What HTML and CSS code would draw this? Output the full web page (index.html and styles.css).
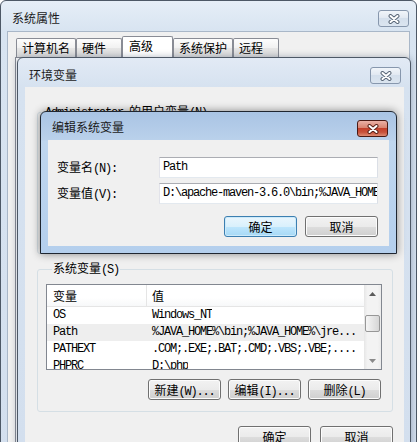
FILE: index.html
```html
<!DOCTYPE html>
<html lang="zh-CN">
<head>
<meta charset="utf-8">
<title>系统属性</title>
<link rel="stylesheet" href="styles.css">
</head>
<body>
<div class="win outer">
  <div class="titlebar">
    <span class="title">系统属性</span>
    <span class="close"><svg width="12" height="10" viewBox="0 0 12 10"><path d="M2.5 2 L9.5 8 M9.5 2 L2.5 8" stroke="#5a6778" stroke-width="4" stroke-linecap="round"/><path d="M2.5 2 L9.5 8 M9.5 2 L2.5 8" stroke="#fff" stroke-width="2" stroke-linecap="round"/></svg></span>
  </div>
  <div class="client">
    <div class="tabs">
      <div class="tab">计算机名</div>
      <div class="tab">硬件</div>
      <div class="tab sel">高级</div>
      <div class="tab">系统保护</div>
      <div class="tab">远程</div>
    </div>
    <div class="panel"></div>
  </div>
</div>

<div class="win env">
  <div class="titlebar">
    <span class="title">环境变量</span>
    <span class="close"><svg width="12" height="10" viewBox="0 0 12 10"><path d="M2.5 2 L9.5 8 M9.5 2 L2.5 8" stroke="#5a6778" stroke-width="4" stroke-linecap="round"/><path d="M2.5 2 L9.5 8 M9.5 2 L2.5 8" stroke="#fff" stroke-width="2" stroke-linecap="round"/></svg></span>
  </div>
  <div class="client">
    <fieldset class="group user">
      <legend><span class="m">Administrator </span>的用户变量<span class="m">(N)</span></legend>
    </fieldset>
    <fieldset class="group sys">
      <legend>系统变量<span class="m">(S)</span></legend>
      <div class="listview">
        <div class="lv-main">
          <div class="lv-head"><span class="c1">变量</span><span class="c2">值</span></div>
          <div class="lv-row"><span class="c1 m">OS</span><span class="c2 m">Windows_NT</span></div>
          <div class="lv-row hl"><span class="c1 m">Path</span><span class="c2 m">%JAVA_HOME%\bin;%JAVA_HOME%\jre...</span></div>
          <div class="lv-row"><span class="c1 m">PATHEXT</span><span class="c2 m">.COM;.EXE;.BAT;.CMD;.VBS;.VBE;....</span></div>
          <div class="lv-row"><span class="c1 m">PHPRC</span><span class="c2 m">D:\php</span></div>
        </div>
        <div class="scrollbar">
          <div class="sb-btn"><svg width="7" height="4" viewBox="0 0 7 4"><polygon points="0,4 3.5,0 7,4" fill="#5b5b5b"/></svg></div>
          <div class="sb-track"><div class="thumb"></div></div>
          <div class="sb-btn"><svg width="7" height="4" viewBox="0 0 7 4"><polygon points="0,0 7,0 3.5,4" fill="#8a8a8a"/></svg></div>
        </div>
      </div>
      <div class="btnrow">
        <button class="btn">新建<span class="m">(W)...</span></button>
        <button class="btn">编辑<span class="m">(I)...</span></button>
        <button class="btn">删除<span class="m">(L)</span></button>
      </div>
    </fieldset>
    <div class="footer">
      <button class="btn">确定</button>
      <button class="btn">取消</button>
    </div>
  </div>
</div>

<div class="win edit">
  <div class="titlebar">
    <span class="title">编辑系统变量</span>
    <span class="close"><svg width="12" height="10" viewBox="0 0 12 10"><path d="M2.5 2 L9.5 8 M9.5 2 L2.5 8" stroke="#5b2219" stroke-width="4" stroke-linecap="round"/><path d="M2.5 2 L9.5 8 M9.5 2 L2.5 8" stroke="#fff" stroke-width="2" stroke-linecap="round"/></svg></span>
  </div>
  <div class="client">
    <div class="field"><span class="lbl">变量名<span class="m">(N):</span></span><div class="input m">Path</div></div>
    <div class="field"><span class="lbl">变量值<span class="m">(V):</span></span><div class="input m">D:\apache-maven-3.6.0\bin;%JAVA_HOME%\bin;%JAVA_HOME%\jre\bin</div></div>
    <div class="dlg-btns">
      <button class="btn default">确定</button>
      <button class="btn">取消</button>
    </div>
  </div>
</div>
</body>
</html>
```
FILE: styles.css
```css
*{box-sizing:border-box;margin:0;padding:0}
html,body{width:420px;height:442px;overflow:hidden}
body{position:relative;background:#fff;font-family:"Noto Sans CJK SC","Noto Sans",sans-serif;font-size:12px;color:#000;line-height:14px}
.m{font-family:"Liberation Mono","DejaVu Sans Mono",monospace;letter-spacing:-1.2px}

.win{display:flex;flex-direction:column;border:1px solid #4d5866;border-radius:6px 6px 0 0}
.titlebar{flex:none;display:flex;justify-content:space-between;align-items:flex-start}
.title{line-height:16px;color:#1b1b1b}
.close{flex:none;width:31px;height:17px;display:flex;align-items:center;justify-content:center;border:1px solid #8797ad;border-radius:3px;background:linear-gradient(#f1f5fa,#e2e9f2 45%,#d4dfec 50%,#dbe5f0)}
.close svg{display:block}

.outer{width:417px;height:470px;background:linear-gradient(#e6eef7,#d8e4f1 30px,#d3dfee)}
.outer .titlebar{height:30px;padding:9px 7px 0 11px}
.outer>.client{flex:1;margin:0 6px;background:#f0f0f0;border:1px solid #a9b7c8;border-bottom:none;display:flex;flex-direction:column}
.tabs{flex:none;height:25px;display:flex;align-items:flex-end;padding-left:8px}
.tab{height:19px;min-width:46px;padding:0 5px;line-height:17px;border:1px solid #898c95;border-bottom:none;border-radius:2px 2px 0 0;background:linear-gradient(#fdfdfd,#f1f1f1 50%,#e6e6e6 51%,#dcdcdc);white-space:nowrap}
.tab.sel{height:21px;min-width:51px;padding-left:6px;background:#fff}
.panel{flex:1;margin:0 7px;background:#fff;border:1px solid #898c95}

.env{position:absolute;left:17px;top:57px;width:394px;height:400px;background:linear-gradient(#e2eaf5,#d6e2f0 29px,#d3dfee);box-shadow:0 0 7px rgba(30,50,80,.35)}
.env .titlebar{height:29px;padding:9px 9px 0 11px}
.env>.client{flex:1;margin:0 6px 0 7px;background:#f0f0f0;padding:0 11px 0 12px;display:flex;flex-direction:column}

.group{border:1px solid #d5dfe5;border-radius:3px;min-width:0}
.group legend{margin-left:6px;padding:0 1px;line-height:14px}
.user{margin-top:17px;height:150px;flex:none}
.sys{flex:none;margin-top:7px;padding:0 10px 11px 8px}
.listview{margin-top:7px;height:86px;border:1px solid #828790;background:#fff;display:flex}
.lv-main{flex:1;overflow:hidden;min-width:0}
.lv-head{height:22px;display:flex;border-bottom:1px solid #e5e5e5;line-height:21px;background:linear-gradient(#fff,#fff 60%,#f7f8f9)}
.lv-head .c1{border-right:1px solid #e5e5e5}
.c1{width:100px;padding-left:6px;flex:none;white-space:nowrap}
.c2{padding-left:5px;white-space:nowrap;overflow:hidden}
.lv-row{height:17px;line-height:17px;display:flex}
.lv-row.hl{background:#eeeeee}
.scrollbar{width:17px;flex:none;display:flex;flex-direction:column;background:linear-gradient(90deg,#e6e6e6,#f3f3f3 20%,#f3f3f3 80%,#ebebeb)}
.sb-btn{height:17px;flex:none;display:flex;align-items:center;justify-content:center}
.sb-btn svg{display:block}
.sb-track{flex:1;padding:13px 1px 0}
.thumb{height:17px;border:1px solid #979797;border-radius:2px;background:linear-gradient(90deg,#f5f5f5,#e6e6e6 50%,#d6d6d6)}

.btnrow{margin-top:9px;display:flex;justify-content:flex-end;gap:7px;padding-right:1px}
.btn{font:inherit;line-height:19px;width:73px;height:21px;border:1px solid #707070;border-radius:3px;background:linear-gradient(#f2f2f2,#ebebeb 50%,#dddddd 51%,#cfcfcf);box-shadow:inset 0 0 0 1px #fcfcfc;color:#000;text-align:center;white-space:nowrap;padding:0}
.btn.default{border-color:#3c7fb1;background:linear-gradient(#eaf6fd,#d9f0fc 50%,#bee6fd 51%,#a7d9f5);box-shadow:inset 0 0 0 1px #cdeafa}
.footer{margin-top:14px;display:flex;justify-content:flex-end;gap:9px}

.edit{position:absolute;left:40px;top:111px;width:357px;height:143px;border-color:#1f2630;background:linear-gradient(#a9c4e4,#bad1eb 28px,#bfd6ee 29px,#b4cfed);box-shadow:0 0 9px rgba(0,0,0,.45)}
.edit .titlebar{height:28px;padding:8px 8px 0 11px}
.edit .title{margin-top:-1px}
.edit .close{border-color:#4a1a14;background:linear-gradient(#eab1a6,#d98471 45%,#c4402b 50%,#c8523b 75%,#de8b73)}
.edit>.client{flex:1;margin:0 7px 7px;background:#f0f0f0;padding:17px 11px 0 9px;display:flex;flex-direction:column;gap:5px}
.field{display:flex;align-items:center}
.lbl{width:102px;flex:none;white-space:nowrap}
.input{width:220px;height:21px;border:1px solid;border-color:#abadb3 #dbdfe6 #e3e9ef #e2e3ea;background:#fff;padding-left:3px;line-height:19px;white-space:nowrap;overflow:hidden}
.dlg-btns{margin-top:7px;display:flex;justify-content:flex-end;gap:8px}
```
